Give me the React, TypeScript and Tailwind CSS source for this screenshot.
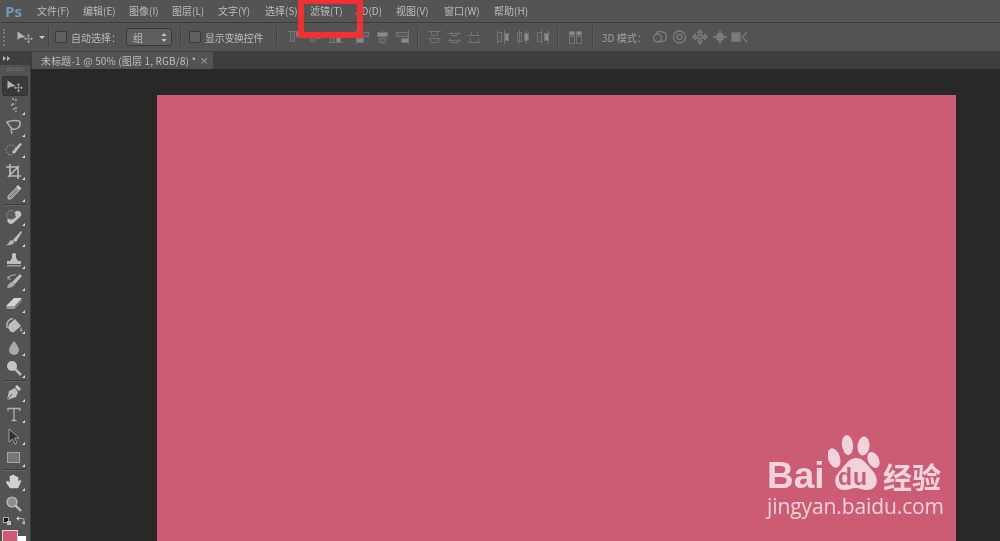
import React from "react";

const fontStack = "font-['Noto_Sans_CJK_SC','Liberation_Sans',sans-serif]";

const menuItems = [
    { label: "文件(F)", width: "w-[46px]" },
    { label: "编辑(E)", width: "w-[46px]" },
    { label: "图像(I)", width: "w-[43px]" },
    { label: "图层(L)", width: "w-[46px]" },
    { label: "文字(Y)", width: "w-[47px]" },
    { label: "选择(S)", width: "w-[45px]" },
    { label: "滤镜(T)", width: "w-[46px]" },
    { label: "3D(D)", width: "w-[40px]" },
    { label: "视图(V)", width: "w-[48px]" },
    { label: "窗口(W)", width: "w-[50px]" },
    { label: "帮助(H)", width: "w-[46px]" },
];

const Divider = () => <div className="w-[2px] h-[20px] bg-[#424242] border-r border-[#5e5e5e] shrink-0" />;

const Checkbox = () => (
    <div className="w-[12px] h-[12px] rounded-[2px] border border-[#3a3a3a] bg-[#606060] shrink-0" />
);

// align / distribute icons in the options bar
const alignPaths: Record<string, React.ReactNode> = {
    top: (
        <>
            <path d="M0 1.5H15" />
            <rect x="2.5" y="1.5" width="4" height="10" fill="#5c5c5c" />
            <rect x="8.5" y="1.5" width="4" height="5" fill="#8a8a8a" />
        </>
    ),
    middle: (
        <>
            <path d="M0 6.5H15" />
            <rect x="2.5" y="2.5" width="4" height="9" fill="#5c5c5c" />
            <rect x="8.5" y="4.5" width="4" height="4" fill="#8a8a8a" />
        </>
    ),
    bottom: (
        <>
            <path d="M0 12.5H15" />
            <rect x="2.5" y="3.5" width="4" height="9" fill="#5c5c5c" />
            <rect x="8.5" y="7.5" width="4" height="5" fill="#8a8a8a" />
        </>
    ),
    left: (
        <>
            <path d="M1.5 0V14" />
            <rect x="1.5" y="2.5" width="12" height="4" fill="#5c5c5c" />
            <rect x="1.5" y="8.5" width="7" height="4" fill="#8a8a8a" />
        </>
    ),
    center: (
        <>
            <path d="M7.5 0V14" />
            <rect x="2.5" y="2.5" width="10" height="4" fill="#8a8a8a" />
            <rect x="4.5" y="8.5" width="6" height="4" fill="#5c5c5c" />
        </>
    ),
    right: (
        <>
            <path d="M13.5 0V14" />
            <rect x="1.5" y="2.5" width="12" height="4" fill="#5c5c5c" />
            <rect x="6.5" y="8.5" width="7" height="4" fill="#8a8a8a" />
        </>
    ),
    dTop: <path d="M1 1.5H14M4.5 1.5V5.5H10.5V1.5M1 8.5H14M3.5 8.5V12.5H11.5V8.5" />,
    dMid: <path d="M1 3.5H14M4.5 1.5V5.5H10.5V1.5M1 10.5H14M3.5 8.5V12.5H11.5V8.5" />,
    dBot: <path d="M1 5.5H14M4.5 1.5V5.5H10.5V1.5M1 12.5H14M3.5 8.5V12.5H11.5V8.5" />,
    dLeft: (
        <>
            <path d="M2.5 0V14M9.5 0V14" />
            <rect x="2.5" y="2.5" width="4" height="9" />
            <rect x="9.5" y="3.5" width="4" height="7" fill="#8a8a8a" />
        </>
    ),
    dCenter: (
        <>
            <path d="M4.5 0V14M11.5 0V14" />
            <rect x="2.5" y="2.5" width="4" height="9" />
            <rect x="9.5" y="3.5" width="4" height="7" fill="#8a8a8a" />
        </>
    ),
    dRight: (
        <>
            <path d="M6.5 0V14M13.5 0V14" />
            <rect x="2.5" y="2.5" width="4" height="9" />
            <rect x="9.5" y="3.5" width="4" height="7" fill="#8a8a8a" />
        </>
    ),
    spacing: (
        <>
            <rect x="1.5" y="1.5" width="5" height="3.5" fill="#8a8a8a" />
            <rect x="8.5" y="1.5" width="5" height="3.5" fill="#8a8a8a" />
            <rect x="1.5" y="6.5" width="5" height="7" />
            <rect x="8.5" y="6.5" width="5" height="7" />
        </>
    ),
};

const AlignIcon = ({ kind }: { kind: string }) => (
    <svg width="15" height="14" viewBox="0 0 15 14" fill="none" stroke="#737373" strokeWidth="1" className="shrink-0">
        {alignPaths[kind]}
    </svg>
);

const MoveIcon = () => (
    <svg width="16" height="12" viewBox="0 0 16 12" className="shrink-0">
        <path d="M0.5 0.5V9L3 7L8.5 6Z" fill="#b5b5b5" />
        <path
            d="M11.5 4V11.5M8 7.75H15M11.5 3.5L10.5 5H12.5ZM11.5 12L10.5 10.5H12.5ZM7.5 7.75L9 6.75V8.75ZM15.5 7.75L14 6.75V8.75Z"
            stroke="#a8a8a8"
            strokeWidth="0.7"
            fill="#a8a8a8"
        />
    </svg>
);

const toolPaths: Record<string, React.ReactNode> = {
    marquee: <path d="M7 2H11M7 7H11M7 7V10M11 2V5M8 12H11M11 10V15" stroke="#a9a9a9" strokeWidth="1.4" strokeDasharray="2 1.5" fill="none" />,
    lasso: (
        <>
            <path d="M2 3C7 1 14 1 15 3C16 8 12 11 7 10C6 8 3 6 2 3Z" stroke="#b4b4b4" strokeWidth="1.5" fill="none" />
            <path d="M6 10L7 15" stroke="#b4b4b4" strokeWidth="1.3" />
        </>
    ),
    quick: (
        <>
            <circle cx="6" cy="9" r="5" stroke="#a0a0a0" strokeWidth="1" strokeDasharray="1.5 1.5" fill="none" />
            <path d="M7 11L15 2L17 3L10 12Q8 13 7 11Z" fill="#bdbdbd" />
        </>
    ),
    crop: <path d="M5 1V13H16M1 4H13V16M14 3L3 14" stroke="#b8b8b8" strokeWidth="1.7" fill="none" />,
    eyedrop: (
        <>
            <path d="M11 4L14 7L6 15H3V12Z" fill="#8f8f8f" stroke="#c5c5c5" strokeWidth="0.8" />
            <path d="M11 3L13 1L16.5 4.5L14.5 6.5Z" fill="#cfcfcf" />
        </>
    ),
    heal: (
        <>
            <rect x="1" y="6" width="16" height="7" rx="3.5" transform="rotate(-42 9 9)" fill="#c2c2c2" />
            <circle cx="6" cy="7" r="4.5" stroke="#a0a0a0" strokeDasharray="1.5 1" fill="#5b5b5b" />
            <circle cx="10" cy="9" r="1" fill="#666" />
        </>
    ),
    brush: (
        <>
            <path d="M8 10L16 1L17 2L11 12Z" fill="#c2c2c2" />
            <path d="M7 10Q10 11 9 13Q6 16 1 15Q4 14 4 12Q5 10 7 10Z" fill="#b2b2b2" />
        </>
    ),
    stamp: (
        <>
            <path d="M7 2Q9 0 11 2V6L13 9H5L7 6Z" fill="#c2c2c2" />
            <rect x="2" y="9" width="14" height="3" fill="#bdbdbd" />
            <rect x="2" y="13" width="14" height="1.5" fill="#9c9c9c" />
        </>
    ),
    history: (
        <>
            <path d="M7 9L15 1L17 3L10 11Z" fill="#bdbdbd" />
            <path d="M2 15Q3 10 7 9L10 11Q8 15 2 15Z" fill="#ababab" />
            <path d="M3 5Q7 1 11 2M3 3V6H6" stroke="#a5a5a5" strokeWidth="1.1" fill="none" />
        </>
    ),
    eraser: (
        <>
            <path d="M1 11L9 3H17L10 11Z" fill="#d4d4d4" />
            <path d="M1 11H10V14H2Z" fill="#9a9a9a" />
            <path d="M10 11L17 3V6L10 14Z" fill="#808080" />
        </>
    ),
    bucket: (
        <>
            <path d="M4 7L10 2L16 9L9 15Q7 16 5 14L3 11Z" fill="#bdbdbd" />
            <path d="M2 6Q5 1 8 2M2 6V11" stroke="#b5b5b5" strokeWidth="1.5" fill="none" />
            <path d="M16 10Q18 13 17 15Q15 15 15 12Z" fill="#9f9f9f" />
        </>
    ),
    blur: <path d="M9 2Q14 8 14 11A5 5 0 0 1 4 11Q4 8 9 2Z" fill="#a9a9a9" />,
    dodge: (
        <>
            <circle cx="7" cy="6" r="5" fill="#c5c5c5" />
            <path d="M10 9L16 15" stroke="#bdbdbd" strokeWidth="2.5" />
        </>
    ),
    pen: (
        <>
            <path d="M2 16L4 7L10 4L13 8L11 13Z" fill="#bdbdbd" />
            <path d="M2 16L7 10" stroke="#555" strokeWidth="1" />
            <path d="M10 3L12 1L16 5L14 7Z" fill="#cfcfcf" />
        </>
    ),
    text: <path d="M3 5V2.5H15V5M9 2.5V14.5M6.5 14.5H11.5" stroke="#b0b0b0" strokeWidth="1.3" fill="none" />,
    select: <path d="M4 1V14L7.5 11L10 16L12 15L9.5 10H14Z" fill="#2f2f2f" stroke="#b5b5b5" strokeWidth="0.8" />,
    rect: <rect x="2.5" y="3.5" width="12" height="10" fill="#777777" stroke="#a5a5a5" strokeWidth="1" />,
    hand: <path d="M5 15L1 9L3 8L5 10V3H7V8V2H9V8V3H11V8V4H13V9L15 7L16 8L13 15Z" fill="#d2d2d2" stroke="#d2d2d2" strokeWidth="0.5" />,
    zoom: (
        <>
            <circle cx="7" cy="7" r="5" fill="#8d8d8d" stroke="#c0c0c0" strokeWidth="1.2" />
            <path d="M10.5 10.5L16 16" stroke="#bfbfbf" strokeWidth="2.4" />
        </>
    ),
};

const Tool = ({ name, corner = true }: { name: string; corner?: boolean }) => (
    <div className="relative w-[30px] h-[21.75px] shrink-0 flex items-center justify-center pr-[2px]">
        <svg width="18" height="17" viewBox="0 0 18 17">{toolPaths[name]}</svg>
        {corner && (
            <svg width="3" height="3" viewBox="0 0 3 3" className="absolute right-[5px] bottom-[2px]">
                <path d="M3 0V3H0Z" fill="#d8d8d8" />
            </svg>
        )}
    </div>
);

const ToolSep = () => <div className="w-[24px] h-[2px] shrink-0 bg-[#3c3c3c] border-b border-[#626262]" />;

// baidu jingyan stamp sitting on top of the shot
const Watermark = () => (
    <div className="absolute left-[767px] top-[434px] w-[190px] h-[90px] text-[#f2d3dc]">
        <span className="absolute left-0 top-[23px] font-['Liberation_Sans',sans-serif] font-bold text-[37px] leading-[38px]">Bai</span>
        <svg width="52" height="56" viewBox="0 0 52 56" className="absolute left-[61px] top-[1px]" fill="#f2d3dc">
            <ellipse cx="6" cy="23" rx="6" ry="10" transform="rotate(-18 6 23)" />
            <ellipse cx="19.5" cy="10" rx="5.5" ry="10" transform="rotate(-6 19.5 10)" />
            <ellipse cx="35.5" cy="11" rx="6" ry="9.5" transform="rotate(6 35.5 11)" />
            <ellipse cx="45.5" cy="25" rx="5.5" ry="8.5" transform="rotate(-25 45.5 25)" />
            <path d="M28 23C36 23 40 31 44 35C51 42 51 55 39 55C34 55 31 53 28 53C24 53 21 55 16 55C6 55 5 43 11 37C16 32 20 23 28 23Z" />
        </svg>
        <span className="absolute left-[71px] top-[32px] font-['Liberation_Sans',sans-serif] font-bold text-[23px] leading-[22px] tracking-[1px] text-[#cb5c74]">du</span>
        <span className={`absolute left-[116px] top-[29px] ${fontStack} font-bold text-[29px] leading-[26px] whitespace-nowrap`}>经验</span>
        <div className="absolute left-0 top-[60px] font-['Open_Sans',sans-serif] text-[21px] leading-[24px] tracking-[-0.1px] whitespace-nowrap">jingyan.baidu.com</div>
    </div>
);

export default function App() {
    return (
        <div className={`relative w-[1000px] h-[541px] overflow-hidden flex flex-col bg-[#535353] text-[#bdbdbd] blur-[0.4px] ${fontStack}`}>
            {/* menu bar */}
            <div className="h-[23px] flex items-center bg-[#545454] border-b border-[#3c3c3c] shrink-0">
                <span className="w-[37px] pl-[5px] font-['Open_Sans',sans-serif] font-bold text-[15px] leading-[20px] text-[#7198c4]">Ps</span>
                {menuItems.map((item) => (
                    <span key={item.label} className={`${item.width} text-[10px] leading-[14px] whitespace-nowrap`}>
                        {item.label}
                    </span>
                ))}
            </div>

            {/* options bar */}
            <div className="h-[29px] flex items-center bg-[#535353] border-b border-[#414141] shrink-0">
                <div className="w-[2px] h-[17px] ml-[3px] border-l-2 border-dotted border-[#777777]" />
                <div className="ml-[12px]"><MoveIcon /></div>
                <div className="w-0 h-0 ml-[6px] mr-[3px] border-x-[3px] border-x-transparent border-t-[3px] border-t-[#c8c8c8]" />
                <Divider />
                <div className="ml-[5px]"><Checkbox /></div>
                <span className="ml-[4px] text-[10px] w-[55px] whitespace-nowrap">自动选择：</span>
                <div className="w-[46px] h-[18px] flex items-center justify-between pl-[6px] pr-[4px] rounded-[3px] bg-[#5e5e5e] border border-[#383838] text-[10px] shrink-0">
                    <span>组</span>
                    <svg width="6" height="9" viewBox="0 0 6 9" fill="#c8c8c8">
                        <path d="M3 0L5.5 3H0.5ZM3 9L0.5 6H5.5Z" />
                    </svg>
                </div>
                <div className="ml-[8px]"><Divider /></div>
                <div className="ml-[7px]"><Checkbox /></div>
                <span className="ml-[4px] text-[10px] w-[58px] whitespace-nowrap tracking-[-0.3px]">显示变换控件</span>
                <div className="ml-[13px]"><Divider /></div>
                <div className="ml-[10px] flex gap-[5px]">
                    <AlignIcon kind="top" />
                    <AlignIcon kind="middle" />
                    <AlignIcon kind="bottom" />
                </div>
                <div className="ml-[12px] flex gap-[5px]">
                    <AlignIcon kind="left" />
                    <AlignIcon kind="center" />
                    <AlignIcon kind="right" />
                </div>
                <div className="ml-[7px]"><Divider /></div>
                <div className="ml-[8px] flex gap-[5px]">
                    <AlignIcon kind="dTop" />
                    <AlignIcon kind="dMid" />
                    <AlignIcon kind="dBot" />
                </div>
                <div className="ml-[13px] flex gap-[5px]">
                    <AlignIcon kind="dLeft" />
                    <AlignIcon kind="dCenter" />
                    <AlignIcon kind="dRight" />
                </div>
                <div className="ml-[7px]"><Divider /></div>
                <div className="ml-[9px]"><AlignIcon kind="spacing" /></div>
                <div className="ml-[9px]"><Divider /></div>
                <span className="ml-[8px] text-[10px] w-[46px] whitespace-nowrap text-[#a0a0a0]">3D 模式：</span>
                <svg width="96" height="16" viewBox="0 0 96 16" fill="none" stroke="#7c7c7c" strokeWidth="1.3" className="ml-[4px] shrink-0">
                    <circle cx="5.5" cy="9" r="4" />
                    <path d="M4 5Q6 1 10 3Q15 3 14 8Q15 12 10 12.5H6" />
                    <circle cx="27.5" cy="8" r="6" />
                    <circle cx="27.5" cy="8" r="2.5" />
                    <path d="M48 1L46 3.5H47V6L44 7H43V5.5L41 8L43 10.5V9H47V12.5H46L48 15L50 12.5H49V9H53V10.5L55 8L53 5.5V7H49V3.5H50Z" />
                    <path d="M68 1V15M61 8H75" />
                    <circle cx="68" cy="8" r="3.5" fill="#7c7c7c" />
                    <rect x="80" y="4" width="8" height="8" fill="#7c7c7c" />
                    <path d="M95 3L90 8L95 13" />
                </svg>
            </div>

            <div className="flex-1 flex min-h-0">
                {/* tools panel */}
                <div className="w-[31px] shrink-0 flex flex-col items-center bg-[#535353] border-r border-[#3a3a3a]">
                    <div className="w-full h-[13px] shrink-0 flex items-center pl-[3px] bg-[#3f3f3f]">
                        <svg width="7" height="5" viewBox="0 0 7 5" fill="#bdbdbd">
                            <path d="M0 0L3 2.5L0 5ZM4 0L7 2.5L4 5Z" />
                        </svg>
                    </div>
                    <div className="w-[16px] h-[3px] shrink-0 mt-[3px] mb-[5px] border-y border-dotted border-[#777777]" />
                    <div className="w-[26px] h-[20px] shrink-0 flex items-center justify-center rounded-[2px] bg-[#3a3a3a] border border-[#333333] mb-[-1px]">
                        <MoveIcon />
                    </div>
                    <Tool name="marquee" />
                    <Tool name="lasso" />
                    <Tool name="quick" />
                    <Tool name="crop" />
                    <Tool name="eyedrop" />
                    <ToolSep />
                    <Tool name="heal" />
                    <Tool name="brush" />
                    <Tool name="stamp" />
                    <Tool name="history" />
                    <Tool name="eraser" />
                    <Tool name="bucket" />
                    <Tool name="blur" />
                    <Tool name="dodge" />
                    <ToolSep />
                    <Tool name="pen" />
                    <Tool name="text" />
                    <Tool name="select" />
                    <Tool name="rect" />
                    <ToolSep />
                    <Tool name="hand" />
                    <Tool name="zoom" corner={false} />
                    <div className="w-full h-[13px] shrink-0 flex justify-between items-center pl-[3px] pr-[5px]">
                        <div className="relative w-[8px] h-[8px]">
                            <div className="absolute left-0 top-0 w-[6px] h-[6px] bg-[#1b1b1b] border border-[#aaaaaa]" />
                            <div className="absolute right-0 bottom-0 w-[4px] h-[4px] bg-[#bbbbbb]" />
                        </div>
                        <svg width="9" height="9" viewBox="0 0 9 9" fill="none" stroke="#bdbdbd" strokeWidth="1">
                            <path d="M1 2.5H6.5Q8 2.5 8 4V8M0.5 2.5L2.5 0.8V4.2ZM8 8.5L6.3 6.5H9.7Z" />
                        </svg>
                    </div>
                    <div className="relative w-full h-[20px] shrink-0">
                        <div className="absolute left-[2px] top-[3px] w-[16px] h-[16px] bg-[#cb5c74] border border-[#d8d8d8]" />
                        <div className="absolute left-[18px] top-[9px] w-[8px] h-[8px] bg-white" />
                    </div>
                </div>

                <div className="flex-1 min-w-0 flex flex-col">
                    {/* document tab */}
                    <div className="h-[17px] flex bg-[#3e3e3e] shrink-0">
                        <div className="w-[181px] ml-[1px] flex items-center justify-between pl-[9px] pr-[4px] bg-[#535353] text-[10px] leading-[17px] whitespace-nowrap tracking-[0.15px]">
                            <span>未标题-1 @ 50% (图层 1, RGB/8) *</span>
                            <span className="text-[9px]">×</span>
                        </div>
                    </div>
                    {/* canvas */}
                    <div className="flex-1 min-h-0 bg-[#282828] pt-[26px] pl-[126px] overflow-hidden">
                        <div className="w-[799px] h-[460px] bg-[#cb5c74]" />
                    </div>
                </div>
            </div>

            {/* red marker drawn over the shot */}
            <div className="absolute left-[298px] top-0 w-[65px] h-[38px] border-x-[6px] border-t-[4px] border-b-[6px] border-[#f03035]" />
            <Watermark />
        </div>
    );
}
